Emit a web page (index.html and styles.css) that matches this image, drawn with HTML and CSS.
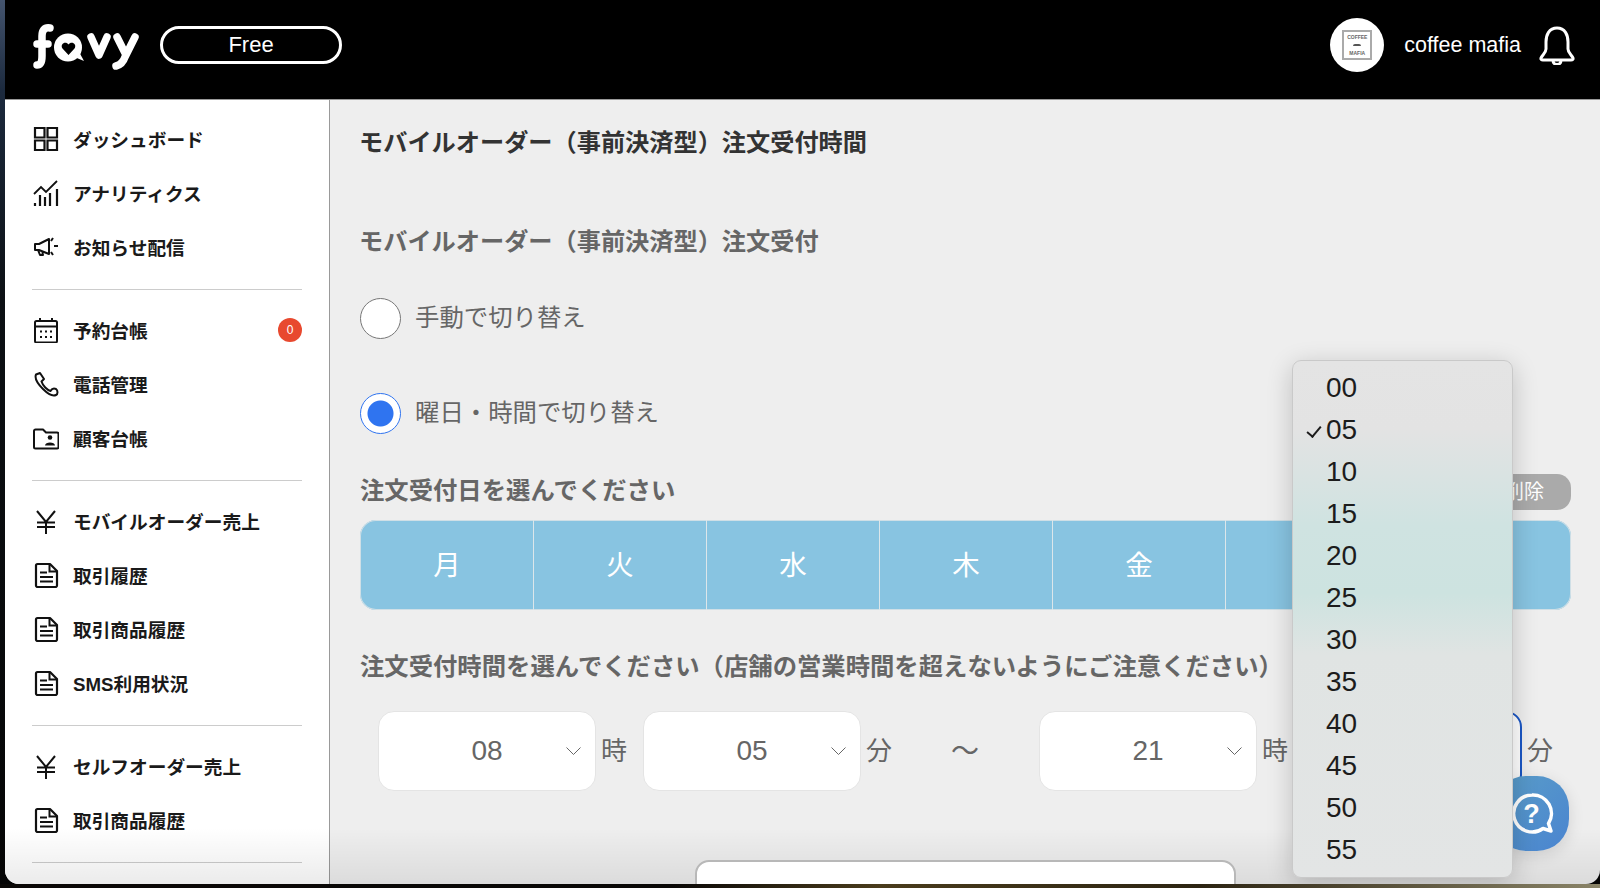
FILE: index.html
```html
<!DOCTYPE html>
<html lang="ja">
<head>
<meta charset="utf-8">
<title>favy</title>
<link rel="stylesheet" href="styles.css">
</head>
<body>
<svg class="defs" aria-hidden="true">
  <symbol id="i-doc" viewBox="0 0 26 26"><path d="M3 3.500A1.500 1.500 0 0 1 4.500 2H17L24 9V23.500A1.500 1.500 0 0 1 22.500 25H4.500A1.500 1.500 0 0 1 3 23.500Z" fill="none" stroke="#111" stroke-width="2.200" stroke-linejoin="round"/><path d="M16.500 2.500V9.500H24M7 10.500H14M7 15H20M7 19.500H20" fill="none" stroke="#111" stroke-width="2"/></symbol>
  <symbol id="i-yen" viewBox="0 0 26 26"><path d="M4 3L13 14L22 3M4 14.500H22M4 19H22M13 14V26" fill="none" stroke="#111" stroke-width="2"/></symbol>
</svg>
<div class="window">
  <header class="topbar">
    <div class="brand">
      <svg class="logo" viewBox="0 0 112 50" role="img" aria-label="favy">
        <g fill="none" stroke="#fff" stroke-width="7.500" stroke-linecap="round" stroke-linejoin="round">
          <path d="M17 5C11 4 9 8 9 13V33C9 40 7 42 4 42M4 21H15"/>
          <path d="M58 14L66 32L74 14M84 14L92 30M102 14L92 34C90 40 87 42 83 43"/>
        </g>
        <circle cx="35" cy="24.500" r="14" fill="#fff"/>
        <path d="M39 33L51 38L45 27Z" fill="#fff"/>
        <path d="M35.500 32L29.500 25.500C26.500 20.500 33 17.500 35.500 21.500C38 17.500 44.500 20.500 41.500 25.500Z" fill="#000"/>
      </svg>
      <span class="plan">Free</span>
    </div>
    <div class="account">
      <div class="avatar"><div class="avatar-box"><span>COFFEE</span><i></i><span>MAFIA</span></div></div>
      <span class="account-name">coffee mafia</span>
      <svg class="bell" viewBox="0 0 36 40" aria-hidden="true"><path d="M18 3C10 3 7 10 7 17V24C7 28 3 30 2 33Q1.500 35 4 35H32Q34.500 35 34 33C33 30 29 28 29 24V17C29 10 26 3 18 3ZM14 35.500A4 4 0 0 0 22 35.500" fill="none" stroke="#fff" stroke-width="3" stroke-linejoin="round"/></svg>
    </div>
  </header>
  <div class="content">
    <aside class="sidebar">
      <ul class="nav">
        <li><svg class="nav-icon" viewBox="0 0 26 26"><path d="M2 2H11.500V11.500H2ZM14.500 2H24V11.500H14.500ZM2 14.500H11.500V24H2ZM14.500 14.500H24V24H14.500Z" fill="none" stroke="#111" stroke-width="2.200"/></svg>ダッシュボード</li>
        <li><svg class="nav-icon" viewBox="0 0 26 26"><path d="M1 14L8 7L13 12L24 1" fill="none" stroke="#111" stroke-width="1.800"/><path d="M2 26V23M7 26V15M12 26V17M17 26V13M24 26V9" fill="none" stroke="#111" stroke-width="2.200"/></svg>アナリティクス</li>
        <li><svg class="nav-icon" viewBox="0 0 26 26"><path d="M2 10H6L16 5V20L6 16H2ZM5 16L7 21H10L9 17M20 4L18 7M21 12H25M20 21L18 18" fill="none" stroke="#111" stroke-width="2" stroke-linejoin="round"/></svg>お知らせ配信</li>
      </ul>
      <ul class="nav">
        <li><svg class="nav-icon" viewBox="0 0 26 26"><path d="M2 5.500A1.500 1.500 0 0 1 3.500 4H22.500A1.500 1.500 0 0 1 24 5.500V24A1.500 1.500 0 0 1 22.500 25.500H3.500A1.500 1.500 0 0 1 2 24ZM2 9.500H24M7 1V5M19 1V5" fill="none" stroke="#111" stroke-width="2"/><path d="M7 13.500h2v2H7ZM12 13.500h2v2h-2ZM17 13.500h2v2h-2ZM7 19h2v2H7ZM12 19h2v2h-2ZM17 19h2v2h-2Z" fill="#111"/></svg>予約台帳<span class="badge">0</span></li>
        <li><svg class="nav-icon" viewBox="0 0 26 26"><path d="M3 3.500L7 2L11 8L8.500 10.500C10 15 14 19 17.500 20C19 17.500 21 17 23 18C25 19.500 25 23 23 24C20 25.500 15 23 10 18C5 13 1.500 7 3 3.500Z" fill="none" stroke="#111" stroke-width="2" stroke-linejoin="round"/></svg>電話管理</li>
        <li><svg class="nav-icon" viewBox="0 0 26 26"><path d="M1 6A1.500 1.500 0 0 1 2.500 4.500H10L13 7.500H24A1.500 1.500 0 0 1 25.500 9V22A1.500 1.500 0 0 1 24 23.500H2.500A1.500 1.500 0 0 1 1 22Z" fill="none" stroke="#111" stroke-width="2" stroke-linejoin="round"/><circle cx="17" cy="12.500" r="2.300" fill="#111"/><path d="M12 20.500C12 16.500 22 16.500 22 20.500Z" fill="#111"/></svg>顧客台帳</li>
      </ul>
      <ul class="nav">
        <li><svg class="nav-icon"><use href="#i-yen"/></svg>モバイルオーダー売上</li>
        <li><svg class="nav-icon"><use href="#i-doc"/></svg>取引履歴</li>
        <li><svg class="nav-icon"><use href="#i-doc"/></svg>取引商品履歴</li>
        <li><svg class="nav-icon"><use href="#i-doc"/></svg>SMS利用状況</li>
      </ul>
      <ul class="nav">
        <li><svg class="nav-icon"><use href="#i-yen"/></svg>セルフオーダー売上</li>
        <li><svg class="nav-icon"><use href="#i-doc"/></svg>取引商品履歴</li>
      </ul>
    </aside>
    <main class="main">
      <h1 class="page-title">モバイルオーダー（事前決済型）注文受付時間</h1>
      <h2 class="section-title">モバイルオーダー（事前決済型）注文受付</h2>
      <div class="radio-row first"><span class="radio"></span>手動で切り替え</div>
      <div class="radio-row"><span class="radio on"></span>曜日・時間で切り替え</div>
      <div class="day-head">
        <h3 class="field-title">注文受付日を選んでください</h3>
        <span class="delete">削除</span>
      </div>
      <div class="week">
        <div>月</div><div>火</div><div>水</div><div>木</div><div>金</div><div>土</div><div>日</div>
      </div>
      <h3 class="field-title time-title">注文受付時間を選んでください（店舗の営業時間を超えないようにご注意ください）</h3>
      <div class="time-row">
        <div class="select">08<svg class="chev" viewBox="0 0 15 8"><path d="M.5.500L7.500 7.500L14.500.500" fill="none" stroke="#666" stroke-width="1"/></svg></div><span class="unit">時</span>
        <div class="select">05<svg class="chev" viewBox="0 0 15 8"><path d="M.5.500L7.500 7.500L14.500.500" fill="none" stroke="#666" stroke-width="1"/></svg></div><span class="unit">分</span>
        <span class="tilde">～</span>
        <div class="select">21<svg class="chev" viewBox="0 0 15 8"><path d="M.5.500L7.500 7.500L14.500.500" fill="none" stroke="#666" stroke-width="1"/></svg></div><span class="unit">時</span>
        <div class="select focus"></div><span class="unit">分</span>
      </div>
    </main>
  </div>
  <div class="bottom-shade"></div>
  <div class="sheet"></div>
  <div class="help">
    <svg viewBox="0 0 44 44" aria-hidden="true"><path d="M22 3A18.500 18.500 0 1 0 33 36.500L41 39L38.500 31.500A18.500 18.500 0 0 0 22 3Z" fill="none" stroke="#fff" stroke-width="3.500" stroke-linejoin="round"/><text x="21.500" y="31" text-anchor="middle" class="help-mark">?</text></svg>
  </div>
  <div class="menu">
    <div>00</div><div class="checked">05</div><div>10</div><div>15</div><div>20</div><div>25</div><div>30</div><div>35</div><div>40</div><div>45</div><div>50</div><div>55</div>
  </div>
</div>
</body>
</html>
```
FILE: styles.css
```css
* { box-sizing: border-box; }
html, body { margin: 0; height: 888px; overflow: hidden; }
body {
  font-family: "Liberation Sans", "Noto Sans CJK JP", sans-serif;
  background:
    linear-gradient(90deg, #0a0806 0, #0a0806 42%, #4a3c1c 55%, #2c2412 75%, #8a8468 100%) bottom / 100% 4px no-repeat,
    linear-gradient(180deg, #44546e 0, #1c2a3e 90px, #0c1014 300px, #050505 100%);
  padding-left: 5px;
}
.defs { display: none; }
.window {
  position: relative;
  height: 884px;
  display: flex;
  flex-direction: column;
  background: #eee;
  border-radius: 0 0 14px 14px;
  overflow: hidden;
}
.topbar {
  height: 100px;
  flex: none;
  background: #000;
  border-bottom: 1px solid #999;
  display: flex;
  justify-content: space-between;
  align-items: center;
  padding: 0 25px 9px 28px;
  color: #fff;
}
.brand { display: flex; align-items: center; }
.logo { width: 112px; height: 50px; margin-top: 6px; }
.plan {
  width: 182px;
  height: 38px;
  margin-left: 15px;
  border: 3px solid #fff;
  border-radius: 19px;
  display: flex;
  align-items: center;
  justify-content: center;
  font-size: 22px;
  padding-bottom: 1px;
}
.account { display: flex; align-items: center; margin-top: -1px; }
.avatar {
  width: 54px;
  height: 54px;
  border-radius: 50%;
  background: #fff;
  display: flex;
  align-items: center;
  justify-content: center;
}
.avatar-box {
  width: 30px;
  height: 30px;
  border: 2px solid #aaa;
  display: flex;
  flex-direction: column;
  align-items: center;
  justify-content: space-between;
  padding: 2px 0;
  font-size: 5px;
  font-weight: 700;
  line-height: 6px;
  color: #666;
}
.avatar-box i { width: 8px; height: 2px; border-radius: 2px 2px 0 0; background: #555; }
.account-name { margin-left: 20px; padding-top: 2px; font-size: 21.500px; }
.bell { width: 36px; height: 40px; margin-left: 18px; }
.content { flex: 1; display: flex; min-height: 0; }
.sidebar {
  width: 325px;
  flex: none;
  background: #fff;
  border-right: 1px solid #999;
  padding: 12px 27px 0 27px;
}
.nav {
  list-style: none;
  margin: 0 0 29px;
  padding: 0;
  position: relative;
}
.nav::after {
  content: "";
  position: absolute;
  left: 0;
  right: 0;
  bottom: -16px;
  height: 1px;
  background: #ccc;
}
.nav li {
  height: 54px;
  display: flex;
  align-items: center;
  padding-bottom: 2px;
  font-size: 18.700px;
  font-weight: 700;
  color: #1a1a1a;
}
.nav-icon { width: 26px; height: 26px; margin: 2px 14px 0 1px; flex: none; }
.badge {
  margin: 2px 0 0 auto;
  width: 24px;
  height: 24px;
  border-radius: 50%;
  background: #e8492f;
  color: #fff;
  font-size: 12px;
  font-weight: 400;
  display: flex;
  align-items: center;
  justify-content: center;
}
.main { flex: 1; padding: 25px 29px 0 30px; min-width: 0; }
.page-title, .section-title, .field-title { margin: 0; font-weight: 700; }
.page-title { font-size: 24.200px; line-height: 36px; color: #333; margin-left: -1px; }
.section-title { font-size: 24.200px; line-height: 36px; color: #666; margin: 63px 0 0 -1px; }
.radio-row {
  display: flex;
  align-items: center;
  height: 41px;
  margin-top: 54px;
  padding-bottom: 2px;
  font-size: 24.400px;
  line-height: 36px;
  color: #666;
}
.radio-row.first { margin-top: 38px; }
.radio {
  width: 41px;
  height: 41px;
  border-radius: 50%;
  background: #fff;
  border: 1px solid #777;
  margin: 0 14px -2px 0;
  flex: none;
}
.radio.on {
  border-color: #2f74f0;
  background: radial-gradient(circle, #2f74f0 0 12.500px, #fff 13.500px);
}
.day-head {
  display: flex;
  justify-content: space-between;
  align-items: flex-start;
  margin-top: 40px;
}
.field-title { font-size: 24.350px; line-height: 34px; color: #666; }
.delete {
  width: 92px;
  height: 36px;
  border-radius: 14px;
  background: #aaa;
  color: #fff;
  font-size: 20px;
  line-height: 36px;
  text-align: right;
  padding-right: 27px;
}
.week {
  display: flex;
  height: 90px;
  margin-top: 10px;
  background: #88c4e1;
  border-radius: 16px;
  box-shadow: 0 0 0 1px #cfdfe6 inset;
  overflow: hidden;
}
.week div {
  flex: none;
  width: 173px;
  display: flex;
  align-items: center;
  justify-content: center;
  padding-bottom: 4px;
  color: #fff;
  font-size: 27.500px;
  border-left: 1px solid #dce6ea;
}
.week div:first-child { border-left-color: transparent; }
.time-title { margin-top: 40px; }
.time-row {
  display: flex;
  align-items: center;
  margin-top: 27px;
  padding-left: 18px;
}
.select {
  position: relative;
  width: 218px;
  height: 80px;
  flex: none;
  background: #fff;
  border: 1px solid #e4e4e4;
  border-radius: 16px;
  display: flex;
  align-items: center;
  justify-content: center;
  font-size: 28px;
  color: #666;
}
.select.focus { border: 2px solid #1a56c4; }
.chev { position: absolute; right: 14px; top: 35px; width: 15px; height: 8px; }
.unit { width: 47px; flex: none; padding: 0 0 5px 5px; font-size: 26px; color: #666; }
.tilde { width: 114px; margin-right: 17px; flex: none; padding-bottom: 5px; text-align: center; font-size: 28px; color: #666; }
.sheet {
  position: absolute;
  left: 690px;
  top: 860px;
  width: 541px;
  height: 40px;
  background: #fff;
  border: 2px solid #b8b8b8;
  border-radius: 14px 14px 0 0;
}
.bottom-shade {
  position: absolute;
  left: 0;
  right: 0;
  bottom: 0;
  height: 56px;
  background: linear-gradient(180deg, rgba(0,0,0,0), rgba(0,0,0,.08));
  pointer-events: none;
}
.help {
  position: absolute;
  left: 1489px;
  top: 776px;
  width: 75px;
  height: 75px;
  border-radius: 32px;
  background: linear-gradient(135deg, #5a9ec8, #4a84d0);
  box-shadow: 0 4px 16px rgba(0,0,0,.12);
  display: flex;
  align-items: center;
  justify-content: center;
}
.help svg { width: 44px; height: 44px; }
.help-mark { font-size: 27px; font-weight: 700; fill: #fff; font-family: "Liberation Sans", sans-serif; }
.menu {
  position: absolute;
  left: 1287px;
  top: 360px;
  width: 221px;
  height: 518px;
  padding: 6px 0 8px 33px;
  border: 1px solid #c9c9c9;
  border-radius: 9px;
  background: linear-gradient(180deg, #e4e4e4 0, #e3e3e3 13%, #cfe3e1 32%, #cde3e0 45%, #e0e4e3 57%, #e3e5e5 100%);
  box-shadow: 0 6px 26px rgba(0,0,0,.2);
  font-size: 28px;
  color: #1c1c1c;
}
.menu div { height: 42px; line-height: 42px; position: relative; }
.menu .checked::before {
  content: "";
  position: absolute;
  left: -16px;
  top: 14px;
  width: 6px;
  height: 12px;
  border: solid #1c1c1c;
  border-width: 0 2px 2px 0;
  transform: rotate(40deg);
}
```
